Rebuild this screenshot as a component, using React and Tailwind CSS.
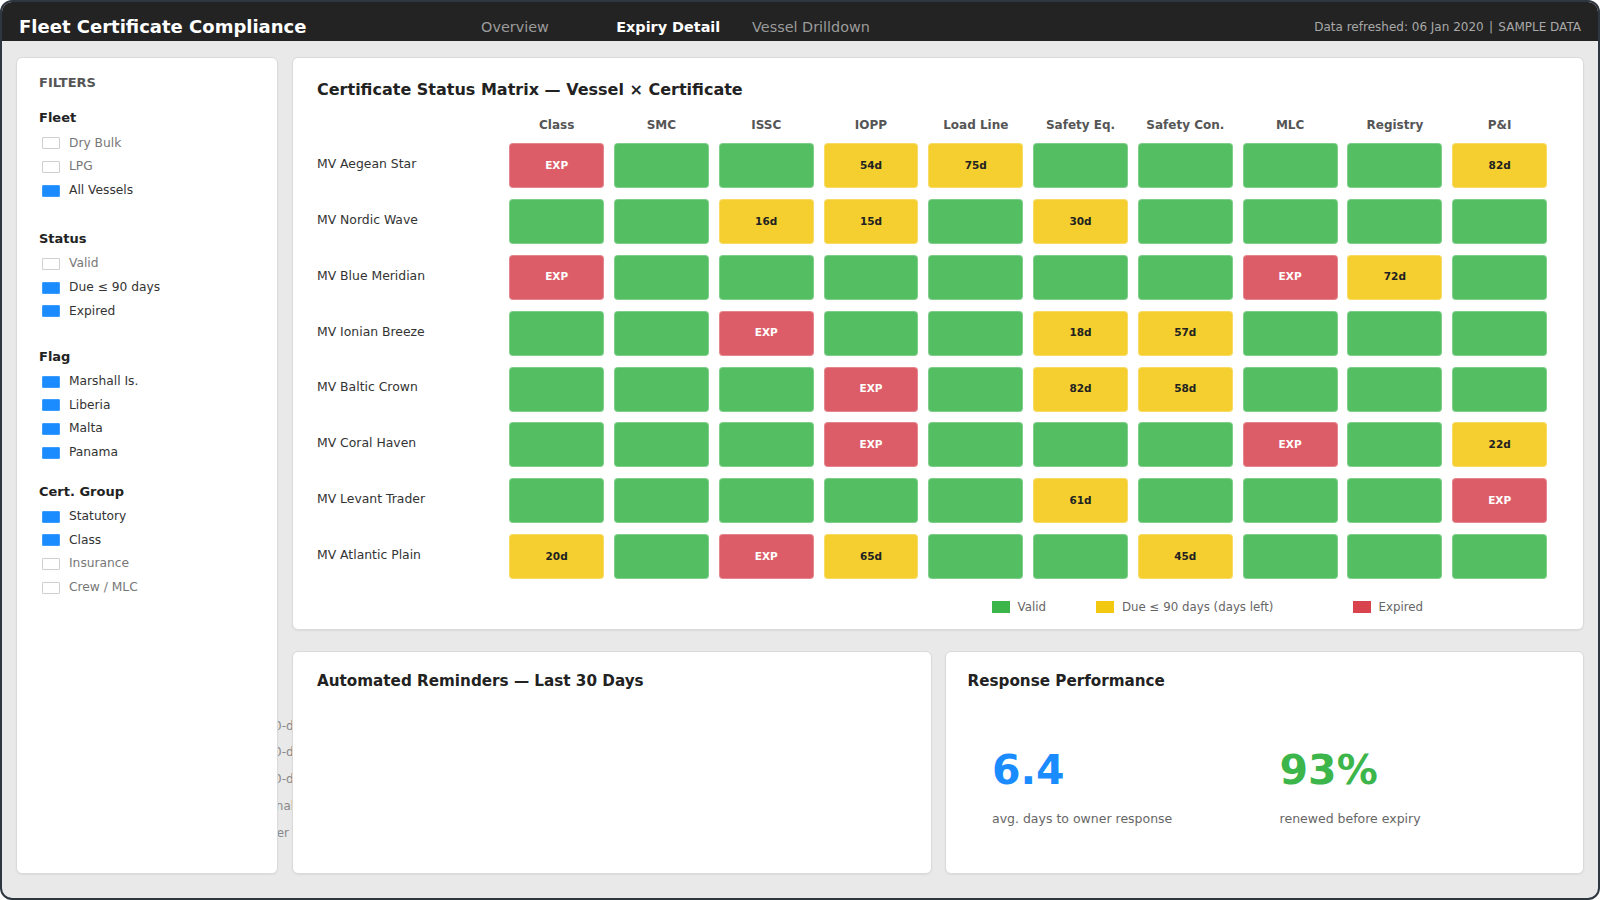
import React from "react";

// Certificate matrix data: G = valid, X = expired, number = days left
const CERTS = ["Class", "SMC", "ISSC", "IOPP", "Load Line", "Safety Eq.", "Safety Con.", "MLC", "Registry", "P&I"];

const VESSELS = [
  ["MV Aegean Star", ["X", "G", "G", 54, 75, "G", "G", "G", "G", 82]],
  ["MV Nordic Wave", ["G", "G", 16, 15, "G", 30, "G", "G", "G", "G"]],
  ["MV Blue Meridian", ["X", "G", "G", "G", "G", "G", "G", "X", 72, "G"]],
  ["MV Ionian Breeze", ["G", "G", "X", "G", "G", 18, 57, "G", "G", "G"]],
  ["MV Baltic Crown", ["G", "G", "G", "X", "G", 82, 58, "G", "G", "G"]],
  ["MV Coral Haven", ["G", "G", "G", "X", "G", "G", "G", "X", "G", 22]],
  ["MV Levant Trader", ["G", "G", "G", "G", "G", 61, "G", "G", "G", "X"]],
  ["MV Atlantic Plain", [20, "G", "X", 65, "G", "G", 45, "G", "G", "G"]],
];

const FILTERS = [
  { title: "Fleet", mt: "mt-[19.3px]", items: [["Dry Bulk", false], ["LPG", false], ["All Vessels", true]] },
  { title: "Status", mt: "mt-[28.5px]", items: [["Valid", false], ["Due ≤ 90 days", true], ["Expired", true]] },
  { title: "Flag", mt: "mt-[25.7px]", items: [["Marshall Is.", true], ["Liberia", true], ["Malta", true], ["Panama", true]] },
  { title: "Cert. Group", mt: "mt-[19.4px]", items: [["Statutory", true], ["Class", true], ["Insurance", false], ["Crew / MLC", false]] },
];

const REMINDER_TYPES = ["90-day notice", "60-day notice", "30-day notice", "Final notice", "Tier 2 escalation"];

function Cell({ v }) {
  const base = "h-[45px] rounded-[4px] border border-white/25 flex items-center justify-center text-[10.5px] font-bold";
  if (v === "G") return <div className={`${base} bg-[#54be63]`} />;
  if (v === "X") return <div className={`${base} bg-[#dc5d67] text-white`}>EXP</div>;
  return <div className={`${base} bg-[#f4cf2f] text-[#222]`}>{v}d</div>;
}

function FilterItem({ label, on }) {
  return (
    <div className="h-[23.6px] flex items-center pl-[3px]">
      {on ? (
        <span className="w-[18px] h-[12px] bg-[#1a8cff] rounded-[1px] border border-[#3d9dff]" />
      ) : (
        <span className="w-[18px] h-[12px] bg-white rounded-[1px] border border-[#cfcfcf]" />
      )}
      <span className={`ml-[9px] text-[12.25px] leading-[15px] ${on ? "text-[#333]" : "text-[#777]"}`}>{label}</span>
    </div>
  );
}

function Sidebar() {
  return (
    <aside className="w-[262px] shrink-0 bg-white border border-[#dadada] rounded-[6px] shadow-[0_1px_2px_rgba(0,0,0,0.06)] pt-[17px] pl-[22px]">
      <div className="text-[13px] leading-[16px] font-bold text-[#555]">FILTERS</div>
      {FILTERS.map((g) => (
        <div key={g.title} className={g.mt}>
          <div className="text-[13px] leading-[16px] font-bold text-[#222]">{g.title}</div>
          <div className="mt-[5.3px]">
            {g.items.map(([label, on]) => (
              <FilterItem key={label} label={label} on={on} />
            ))}
          </div>
        </div>
      ))}
    </aside>
  );
}

function LegendItem({ color, label, w }) {
  return (
    <div className={`flex items-center ${w}`}>
      <span className={`w-[18px] h-[12px] ${color}`} />
      <span className="ml-[8px] text-[11.8px] leading-[15px] text-[#666]">{label}</span>
    </div>
  );
}

function Matrix() {
  return (
    <section className="h-[573px] shrink-0 bg-white border border-[#dadada] rounded-[6px] shadow-[0_1px_2px_rgba(0,0,0,0.06)] pt-[21.6px] pl-[24px]">
      <h2 className="text-[16px] leading-[19px] font-bold text-[#222]">Certificate Status Matrix — Vessel × Certificate</h2>
      <div className="mt-[17.7px] grid grid-cols-[182.3px_repeat(10,94.9px)] gap-x-[9.9px] gap-y-[10.85px]">
        <div className="h-[16px]" />
        {CERTS.map((c) => (
          <div key={c} className="h-[16px] pt-[1.5px] text-center text-[12px] leading-[15px] font-bold text-[#555]">
            {c}
          </div>
        ))}
        {VESSELS.map(([name, cells]) => (
          <React.Fragment key={name}>
            <div className="flex items-center pb-[2.5px] text-[12.4px] text-[#333]">{name}</div>
            {cells.map((v, i) => (
              <Cell key={i} v={v} />
            ))}
          </React.Fragment>
        ))}
      </div>
      <div className="mt-[20.9px] ml-[674.5px] flex items-center">
        <LegendItem color="bg-[#3cb54a]" label="Valid" w="w-[104.5px]" />
        <LegendItem color="bg-[#f2c811]" label="Due ≤ 90 days (days left)" w="w-[256.5px]" />
        <LegendItem color="bg-[#d9434e]" label="Expired" w="" />
      </div>
    </section>
  );
}

function Reminders() {
  return (
    <section className="relative bg-white border border-[#dadada] rounded-[6px] shadow-[0_1px_2px_rgba(0,0,0,0.06)] pt-[19.7px] px-[24px]">
      <h2 className="text-[15.2px] leading-[18px] font-bold text-[#222]">Automated Reminders — Last 30 Days</h2>
      {/* category axis labels spill out to the left of the chart box */}
      <div className="absolute right-[calc(100%+1px)] top-[60.5px] w-[14px] overflow-hidden">
        <div className="ml-[-11.6px] whitespace-nowrap text-[12px] leading-[26.8px] text-[#888]">
          {REMINDER_TYPES.map((t) => (
            <div key={t}>{t}</div>
          ))}
        </div>
      </div>
    </section>
  );
}

function Kpi({ value, color, label, w }) {
  return (
    <div className={w}>
      <div className={`text-[41px] leading-[40px] font-bold ${color}`}>{value}</div>
      <div className="mt-[20.7px] text-[12.5px] leading-[15px] text-[#666]">{label}</div>
    </div>
  );
}

function Response() {
  return (
    <section className="bg-white border border-[#dadada] rounded-[6px] shadow-[0_1px_2px_rgba(0,0,0,0.06)] pt-[19.7px] px-[22px]">
      <h2 className="text-[15.2px] leading-[18px] font-bold text-[#222]">Response Performance</h2>
      <div className="mt-[60.5px] pl-[24.5px] flex">
        <Kpi value="6.4" color="text-[#1a8cff]" label="avg. days to owner response" w="w-[287.6px]" />
        <Kpi value="93%" color="text-[#3cb54a]" label="renewed before expiry" w="" />
      </div>
    </section>
  );
}

export default function App() {
  return (
    <div className="w-[1600px] h-[900px] bg-white font-['DejaVu_Sans',sans-serif]">
      <div className="h-full border-2 border-[#2e3640] rounded-[12px] overflow-hidden bg-[#e9e9e9] flex flex-col">
        <header className="h-[39px] shrink-0 bg-[#232323] flex items-center pt-[10px] pl-[17px] pr-[17px]">
          <h1 className="text-[18px] leading-[22px] font-bold text-white">Fleet Certificate Compliance</h1>
          <nav className="ml-[174.6px] flex items-center text-[14.4px] leading-[18px] pt-[1px]">
            <span className="text-[#9b9b9b]">Overview</span>
            <span className="ml-[67.4px] font-bold text-white">Expiry Detail</span>
            <span className="ml-[31.9px] text-[#9b9b9b]">Vessel Drilldown</span>
          </nav>
          <div className="ml-auto pt-[2px] text-[12px] leading-[15px] text-[#a8a8a8]">
            Data refreshed: 06 Jan 2020 <span className="mx-[1.5px]">|</span> SAMPLE DATA
          </div>
        </header>
        <main className="flex-1 flex gap-[14px] px-[14px] pt-[16px] pb-[24px] min-h-0">
          <Sidebar />
          <div className="flex-1 flex flex-col gap-[21px] min-w-0">
            <Matrix />
            <div className="flex-1 grid grid-cols-2 gap-[13px]">
              <Reminders />
              <Response />
            </div>
          </div>
        </main>
      </div>
    </div>
  );
}
